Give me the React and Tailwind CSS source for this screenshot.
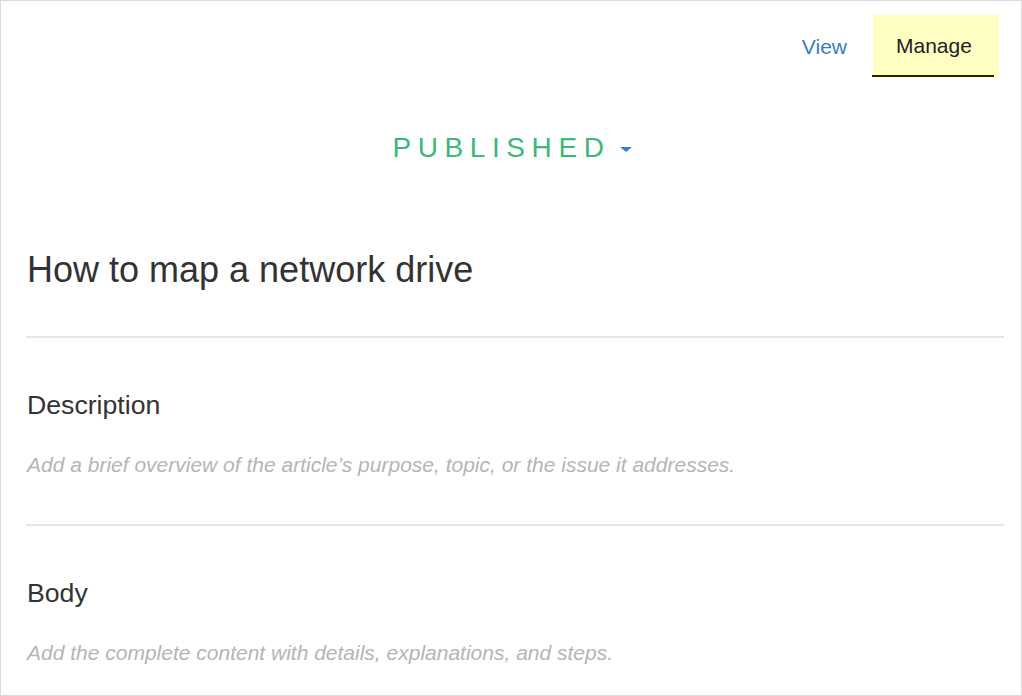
const fieldSections = [
  {
    label: "Description",
    hint: "Add a brief overview of the article’s purpose, topic, or the issue it addresses.",
  },
  {
    label: "Body",
    hint: "Add the complete content with details, explanations, and steps.",
  },
];

const App = () => {
  return (
    <div
      className="w-[1022px] h-[696px] overflow-hidden border border-[#dcdcdc] bg-white text-[#333]"
      style={{ fontFamily: '"Liberation Sans", Arial, sans-serif' }}
    >
      {/* Top actions */}
      <div className="flex items-center justify-end pt-[14px] pr-[22px]">
        <a href="#" className="mr-[26px] text-[21px] leading-none text-[#3a7ebf]">
          View
        </a>
        <button className="relative flex h-[63px] w-[126px] items-center bg-[#ffffc4] pb-[2px] pl-[23px] text-[21px] leading-none text-[#222]">
          Manage
          <span className="absolute bottom-[1px] left-[-1px] right-[5px] h-[2px] bg-[#2b2300]" />
        </button>
      </div>

      {/* Status */}
      <div className="mt-[56px] flex items-center justify-center">
        <button className="flex items-center pl-[3px] text-[28px] leading-[28px] tracking-[0.235em] text-[#3cb878]">
          PUBLISHED
          <svg className="ml-[10px] mt-[3px] h-[5px] w-[12px]" viewBox="0 0 12 5">
            <path d="M0 0h12L6 5z" fill="#3a7ebf" />
          </svg>
        </button>
      </div>

      {/* Article */}
      <div className="pl-[25px] pr-[17px]">
        <h1 className="mt-[90px] pl-[1px] text-[36px] leading-[36px] font-normal">
          How to map a network drive
        </h1>

        {fieldSections.map((section, i) => (
          <section key={section.label}>
            <div className={i === 0 ? "mt-[48px] h-[2px] bg-[#e6e6e6]" : "mt-[49px] h-[2px] bg-[#e6e6e6]"} />
            <h2 className="mt-[54px] pl-[1px] text-[26.67px] leading-[27px] font-normal">
              {section.label}
            </h2>
            <p className="mt-[35px] pl-[1px] text-[21px] leading-[21px] italic text-[#b5b5b5]">
              {section.hint}
            </p>
          </section>
        ))}
      </div>
    </div>
  );
};

export default App;
